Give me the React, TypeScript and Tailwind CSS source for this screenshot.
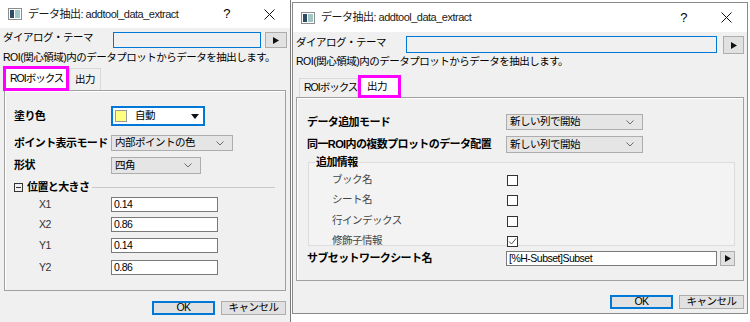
import React from "react";

function WinIcon() {
  return (
    <svg width="14" height="12" viewBox="0 0 14 12">
      <rect x="0.5" y="0.5" width="13" height="11" fill="#fff" stroke="#8c8c8c" />
      <rect x="2" y="2" width="4" height="8" fill="#2d4b63" />
      <rect x="7" y="2" width="5" height="8" fill="#9fc7c4" />
    </svg>
  );
}

function TitleBar({ height }: { height: string }) {
  return (
    <div className={`${height} bg-white flex items-center pl-[8px] shrink-0`}>
      <WinIcon />
      <span className="ml-[6px] text-[11px] tracking-[-0.5px] text-[#1a1a1a] whitespace-nowrap">データ抽出: addtool_data_extract</span>
      <span className="ml-auto text-[13px] text-black">?</span>
      <svg className="ml-[34px] mr-[15px]" width="11" height="11" viewBox="0 0 11 11">
        <path d="M0.5 0.5 L10.5 10.5 M10.5 0.5 L0.5 10.5" stroke="#111" strokeWidth="1" />
      </svg>
    </div>
  );
}

function ArrowBtn({ size }: { size: string }) {
  return (
    <div className={`${size} bg-[#e1e1e1] border border-[#adadad] flex items-center justify-center shrink-0`}>
      <svg width="6" height="7" viewBox="0 0 6 7">
        <path d="M0 0 L6 3.5 L0 7 Z" fill="#111" />
      </svg>
    </div>
  );
}

function Chevron() {
  return (
    <svg className="ml-auto mr-[8px]" width="8" height="5" viewBox="0 0 8 5">
      <path d="M0.5 0.5 L4 4 L7.5 0.5" stroke="#6a6a6a" fill="none" strokeWidth="1" />
    </svg>
  );
}

function Select({ className, text }: { className: string; text: string }) {
  return (
    <div className={`${className} bg-[#e5e5e5] border border-[#adadad] flex items-center pl-[3px] text-black whitespace-nowrap`}>
      <span>{text}</span>
      <Chevron />
    </div>
  );
}

function TextBox({ className, text }: { className: string; text: string }) {
  return (
    <div className={`${className} bg-white border border-[#7a7a7a] flex items-center pl-[2px] text-black whitespace-nowrap`}>
      {text}
    </div>
  );
}

function CheckBox({ checked }: { checked?: boolean }) {
  return (
    <div className="w-[11px] h-[11px] bg-white border border-[#333] flex items-center justify-center">
      {checked && (
        <svg width="9" height="9" viewBox="0 0 9 9">
          <path d="M1 4.5 L3.5 7 L8 1.5" stroke="#555" fill="none" strokeWidth="1" />
        </svg>
      )}
    </div>
  );
}

function Buttons({ top }: { top: string }) {
  return (
    <div className={`${top} flex justify-end gap-[6px] text-black`}>
      <div className="w-[63px] h-[14px] bg-[#e1e1e1] border-2 border-[#0078d7] flex items-center justify-center">OK</div>
      <div className="w-[65px] h-[14px] bg-[#e1e1e1] border border-[#adadad] flex items-center justify-center">キャンセル</div>
    </div>
  );
}

function LeftDialog() {
  return (
    <div className="w-[291px] h-[322px] bg-[#f0f0f0] border-r border-[#7a7a7a] flex flex-col shrink-0">
      <TitleBar height="h-[28px]" />
      <div className="px-[3px] flex flex-col">
        <div className="mt-[2px] h-[18px] flex items-start">
          <span className="w-[110px] text-black leading-[14px]">ダイアログ・テーマ</span>
          <div className="mt-[2px] w-[148px] h-[16px] bg-[#f0f0f0] border border-[#0078d7]" />
          <ArrowBtn size="mt-[2px] ml-[4px] w-[22px] h-[16px]" />
        </div>
        <div className="mt-[2px] h-[16px] flex items-center text-black whitespace-nowrap">
          ROI(関心領域)内のデータプロットからデータを抽出します。
        </div>
        <div className="h-[24px] flex items-end">
          <div className="h-[25px] w-[66px] bg-white border-[3px] border-[#ff00ff] flex items-center pl-[4px] text-black tracking-[-1px] whitespace-nowrap -mb-[1px] z-10">
            ROIボックス
          </div>
          <div className="h-[22px] px-[5px] bg-[#f0f0f0] border border-b-0 border-[#d9d9d9] flex items-center text-black">
            出力
          </div>
        </div>
        <div className="ml-[1px] w-[282px] h-[201px] border border-[#a0a0a0] shadow-[inset_1px_1px_0_#fff] flex flex-col pl-[9px] text-black">
          <div className="mt-[15px] flex items-center h-[20px]">
            <span className="w-[97px] font-bold text-[11px] tracking-[-0.6px] whitespace-nowrap">塗り色</span>
            <div className="w-[94px] h-[20px] bg-white border-2 border-[#0078d7] flex items-center pl-[2px]">
              <div className="w-[12px] h-[12px] bg-[#ffff80] border border-[#9a9a9a]" />
              <span className="ml-[8px]">自動</span>
              <svg className="ml-auto mr-[4px]" width="8" height="5" viewBox="0 0 8 5">
                <path d="M0 0 L8 0 L4 5 Z" fill="#111" />
              </svg>
            </div>
          </div>
          <div className="mt-[9px] flex items-center h-[16px]">
            <span className="w-[97px] font-bold text-[11px] tracking-[-0.6px] whitespace-nowrap">ポイント表示モード</span>
            <Select className="w-[122px] h-[16px]" text="内部ポイントの色" />
          </div>
          <div className="mt-[6px] flex items-center h-[17px]">
            <span className="w-[97px] font-bold text-[11px] tracking-[-0.6px] whitespace-nowrap">形状</span>
            <Select className="w-[90px] h-[17px]" text="四角" />
          </div>
          <div className="mt-[6px] flex items-center h-[14px]">
            <svg width="9" height="9" viewBox="0 0 9 9">
              <rect x="0.5" y="0.5" width="8" height="8" fill="none" stroke="#333" />
              <path d="M2 4.5 L7 4.5" stroke="#333" />
            </svg>
            <span className="ml-[4px] font-bold text-[11px] tracking-[-0.6px] whitespace-nowrap">位置と大きさ</span>
            <div className="ml-[3px] w-[183px] h-px bg-[#c8c8c8]" />
          </div>
          {[
            ["X1", "0.14", "mt-[3px]"],
            ["X2", "0.86", "mt-[5px]"],
            ["Y1", "0.14", "mt-[6px]"],
            ["Y2", "0.86", "mt-[7px]"],
          ].map(([k, v, m]) => (
            <div key={k} className={`${m} flex items-center h-[15px]`}>
              <span className="pl-[25px] w-[97px] text-[#333]">{k}</span>
              <TextBox className="w-[107px] h-[15px]" text={v} />
            </div>
          ))}
        </div>
        <Buttons top="mt-[10px] pr-[1px]" />
      </div>
    </div>
  );
}

function RightDialog() {
  return (
    <div className="ml-[1px] mt-[2px] w-[456px] h-[312px] bg-[#f0f0f0] border border-[#8a8a8a] flex flex-col">
      <TitleBar height="h-[29px]" />
      <div className="px-[3px] flex flex-col">
        <div className="mt-[3px] h-[19px] flex items-start">
          <span className="w-[110px] text-black leading-[14px]">ダイアログ・テーマ</span>
          <div className="mt-[1px] w-[311px] h-[17px] bg-[#f0f0f0] border border-[#0078d7]" />
          <ArrowBtn size="mt-[1px] ml-[6px] w-[21px] h-[18px]" />
        </div>
        <div className="h-[16px] flex items-center text-black whitespace-nowrap">
          ROI(関心領域)内のデータプロットからデータを抽出します。
        </div>
        <div className="mt-[5px] h-[22px] flex items-end">
          <div className="h-[19px] w-[59px] bg-[#f0f0f0] border border-b-0 border-[#d9d9d9] flex items-center pl-[4px] text-black tracking-[-1px] whitespace-nowrap ml-[3px]">
            ROIボックス
          </div>
          <div className="h-[23px] w-[43px] bg-white border-[3px] border-[#ff00ff] flex items-center pl-[6px] text-black -mb-[1px] z-10">
            出力
          </div>
        </div>
        <div className="w-[448px] h-[184px] border border-[#a0a0a0] shadow-[inset_1px_1px_0_#fff] flex flex-col pl-[10px] text-black">
          <div className="mt-[16px] flex items-center h-[16px]">
            <span className="w-[199px] font-bold text-[11px] tracking-[-0.6px] whitespace-nowrap">データ追加モード</span>
            <Select className="w-[137px] h-[16px]" text="新しい列で開始" />
          </div>
          <div className="mt-[6px] flex items-center h-[17px]">
            <span className="w-[199px] font-bold text-[11px] tracking-[-0.6px] whitespace-nowrap">同一ROI内の複数プロットのデータ配置</span>
            <Select className="w-[137px] h-[17px]" text="新しい列で開始" />
          </div>
          <fieldset className="mt-[2px] ml-[1px] w-[427px] h-[91px] border border-[#dcdcdc] bg-[#f3f3f3]">
            <legend className="ml-[6px] px-[1px] font-bold text-[11px] tracking-[-0.6px] leading-[14px]">追加情報</legend>
            {[
              ["ブック名", false, "mt-[5px]"],
              ["シート名", false, "mt-[8px]"],
              ["行インデックス", false, "mt-[9px]"],
              ["修飾子情報", true, "mt-[8px]"],
            ].map(([k, c, m]) => (
              <div key={k as string} className={`${m as string} pl-[23px] flex items-center h-[12px]`}>
                <span className="w-[175px] text-[#444]">{k as string}</span>
                <CheckBox checked={c as boolean} />
              </div>
            ))}
          </fieldset>
          <div className="mt-[5px] flex items-center h-[15px]">
            <span className="w-[199px] font-bold text-[11px] tracking-[-0.6px] whitespace-nowrap">サブセットワークシート名</span>
            <TextBox className="w-[211px] h-[15px]" text="[%H-Subset]Subset" />
            <ArrowBtn size="ml-[3px] w-[15px] h-[15px]" />
          </div>
        </div>
        <Buttons top="mt-[14px]" />
      </div>
    </div>
  );
}

export default function App() {
  return (
    <div className="w-[750px] h-[322px] bg-white flex items-start overflow-hidden text-[10.5px] tracking-[-0.5px] font-['Liberation_Sans','Noto_Sans_CJK_JP',sans-serif]">
      <LeftDialog />
      <RightDialog />
    </div>
  );
}
